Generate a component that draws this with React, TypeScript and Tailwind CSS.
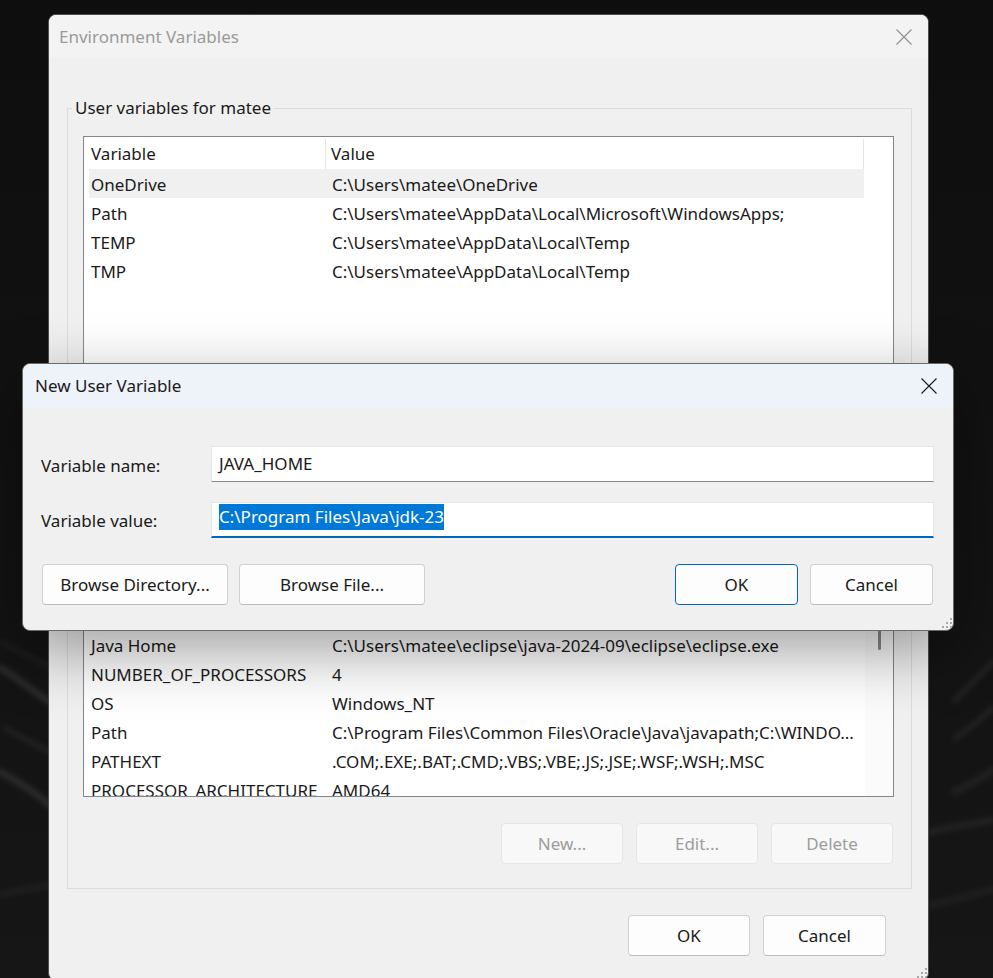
import clsx from "clsx";

type Row = [string, string];

const userRows: Row[] = [
    ["OneDrive", "C:\\Users\\matee\\OneDrive"],
    ["Path", "C:\\Users\\matee\\AppData\\Local\\Microsoft\\WindowsApps;"],
    ["TEMP", "C:\\Users\\matee\\AppData\\Local\\Temp"],
    ["TMP", "C:\\Users\\matee\\AppData\\Local\\Temp"],
];

const systemRows: Row[] = [
    ["ComSpec", "C:\\WINDOWS\\system32\\cmd.exe"],
    ["DriverData", "C:\\Windows\\System32\\Drivers\\DriverData"],
    ["Java Home", "C:\\Users\\matee\\eclipse\\java-2024-09\\eclipse\\eclipse.exe"],
    ["NUMBER_OF_PROCESSORS", "4"],
    ["OS", "Windows_NT"],
    ["Path", "C:\\Program Files\\Common Files\\Oracle\\Java\\javapath;C:\\WINDO..."],
    ["PATHEXT", ".COM;.EXE;.BAT;.CMD;.VBS;.VBE;.JS;.JSE;.WSF;.WSH;.MSC"],
    ["PROCESSOR_ARCHITECTURE", "AMD64"],
    ["PROCESSOR_IDENTIFIER", "Intel64 Family 6 Model 142 Stepping 10, GenuineIntel"],
];

function CloseIcon({ color }: { color: string }) {
    return (
        <svg width="16" height="16" viewBox="0 0 16 16">
            <path d="M0.5 0.5 L15.5 15.5 M15.5 0.5 L0.5 15.5" stroke={color} strokeWidth="1.1" fill="none" />
        </svg>
    );
}

function Gripper() {
    return (
        <svg width="12" height="12" viewBox="0 0 12 12">
            {[
                [9, 1],
                [5, 5],
                [9, 5],
                [1, 9],
                [5, 9],
                [9, 9],
            ].map(([x, y]) => (
                <rect key={`${x}-${y}`} x={x} y={y} width="2" height="2" fill="#a8a8a8" />
            ))}
        </svg>
    );
}

function Button({
    children,
    className,
    disabled,
    focused,
}: {
    children: React.ReactNode;
    className?: string;
    disabled?: boolean;
    focused?: boolean;
}) {
    return (
        <div
            className={clsx(
                "flex h-[41px] items-center justify-center whitespace-nowrap rounded-[4px] border",
                disabled
                    ? "border-[#e6e6e6] bg-[#f8f8f8] text-[#9d9d9d]"
                    : "bg-[#fdfdfd] text-[#1a1a1a]",
                !disabled && (focused ? "border-[#0067c0]" : "border-[#d0d0d0] border-b-[#bcbcbc]"),
                className
            )}
        >
            {children}
        </div>
    );
}

function ListView({
    rows,
    selected,
    scrollbar,
    className,
}: {
    rows: Row[];
    selected?: number;
    scrollbar?: boolean;
    className: string;
}) {
    return (
        <div className={clsx("flex overflow-hidden border border-[#82868d] bg-white", className)}>
            <div className="min-w-0 flex-1 pl-[5px]">
                <div className="flex h-[32px] w-[775px] items-center pt-[2px] text-[#1a1a1a]">
                    <div className="flex h-full w-[237px] items-center border-r border-[#e5e5e5] pl-[2px]">Variable</div>
                    <div className="flex h-full flex-1 items-center border-r border-[#e5e5e5] pl-[5px]">Value</div>
                </div>
                {rows.map(([name, value], i) => (
                    <div
                        key={name + i}
                        className={clsx(
                            "flex h-[29px] w-[775px] items-center whitespace-nowrap pt-[2px]",
                            i === selected && "bg-[#f0f0f0]"
                        )}
                    >
                        <div className="w-[237px] pl-[2px]">{name}</div>
                        <div className="flex-1 pl-[6px]">{value}</div>
                    </div>
                ))}
            </div>
            {scrollbar ? (
                <div className="flex w-[28px] justify-center bg-[#fbfbfb] pt-[20px]">
                    <div className="h-[90px] w-[3px] rounded-full bg-[#8a8a8a]" />
                </div>
            ) : (
                <div className="w-[28px]" />
            )}
        </div>
    );
}

function GroupBox({ label, children }: { label: string; children: React.ReactNode }) {
    return (
        <div className="relative ml-[18px] mr-[16px] border border-[#dcdcdc] pb-[24px] pl-[15px] pr-[17px] pt-[27px]">
            <div className="absolute -top-[12px] left-[4px] bg-[#f0f0f0] px-[3px] leading-[22px] text-[#1a1a1a]">
                {label}
            </div>
            {children}
        </div>
    );
}

function Wallpaper() {
    return (
        <svg className="absolute inset-0" width="993" height="978" viewBox="0 0 993 978">
            <defs>
                <filter id="soft" x="-20%" y="-20%" width="140%" height="140%">
                    <feGaussianBlur stdDeviation="2.5" />
                </filter>
                <linearGradient id="bg" x1="0" y1="0" x2="0" y2="1">
                    <stop offset="0" stopColor="#0e0e0e" />
                    <stop offset="1" stopColor="#161616" />
                </linearGradient>
            </defs>
            <rect width="993" height="978" fill="url(#bg)" />
            <g filter="url(#soft)" fill="none" stroke="#ffffff" strokeLinecap="round">
                <path d="M0 668 C15 675 30 690 50 702" strokeOpacity="0.09" strokeWidth="7" />
                <path d="M0 642 C20 650 35 660 50 668" strokeOpacity="0.05" strokeWidth="4" />
                <path d="M5 728 C20 736 35 745 50 752" strokeOpacity="0.07" strokeWidth="4" />
                <path d="M0 772 C15 780 35 792 50 805" strokeOpacity="0.09" strokeWidth="7" />
                <path d="M0 895 C20 890 35 888 50 885" strokeOpacity="0.04" strokeWidth="6" />
                <path d="M955 700 C965 690 980 675 993 662" strokeOpacity="0.06" strokeWidth="6" />
                <path d="M955 738 C970 728 982 718 993 708" strokeOpacity="0.08" strokeWidth="4" />
                <path d="M955 792 C970 784 982 778 993 770" strokeOpacity="0.05" strokeWidth="7" />
                <path d="M930 832 C950 827 975 823 993 820" strokeOpacity="0.06" strokeWidth="6" />
                <path d="M930 905 C955 900 975 894 993 889" strokeOpacity="0.04" strokeWidth="6" />
            </g>
        </svg>
    );
}

function EnvironmentWindow() {
    return (
        <div className="absolute left-[48px] top-[14px] flex h-[967px] w-[881px] flex-col overflow-hidden rounded-[8px] border border-[#4d4d4d] bg-[#f0f0f0]">
            <div className="flex h-[43px] shrink-0 items-center justify-between bg-[#f3f3f3] pl-[10px] pr-[16px]">
                <span className="text-[#9a9a9a]">Environment Variables</span>
                <CloseIcon color="#8f8f8f" />
            </div>

            <div className="mt-[50px]">
                <GroupBox label="User variables for matee">
                    <ListView rows={userRows} selected={0} className="h-[268px]" />
                    <div className="mt-[26px] flex justify-end gap-[13px] pr-[1px]">
                        <Button className="w-[122px]">New...</Button>
                        <Button className="w-[122px]">Edit...</Button>
                        <Button className="w-[122px]">Delete</Button>
                    </div>
                </GroupBox>
            </div>

            <div className="mt-[15px]">
                <GroupBox label="System variables">
                    <ListView rows={systemRows} scrollbar className="h-[258px]" />
                    <div className="mt-[26px] flex justify-end gap-[13px] pr-[1px]">
                        <Button disabled className="w-[122px]">New...</Button>
                        <Button disabled className="w-[122px]">Edit...</Button>
                        <Button disabled className="w-[122px]">Delete</Button>
                    </div>
                </GroupBox>
            </div>

            <div className="mt-[26px] flex justify-end gap-[13px] pr-[42px]">
                <Button className="w-[122px]">OK</Button>
                <Button className="w-[123px]">Cancel</Button>
            </div>

            <div className="absolute bottom-[1px] right-[0px]">
                <Gripper />
            </div>
        </div>
    );
}

function NewVariableDialog() {
    return (
        <div className="absolute left-[22px] top-[363px] flex h-[268px] w-[932px] flex-col rounded-[8px] border border-[#6a6a6a] bg-[#f0f0f0] shadow-[0_20px_64px_rgba(0,0,0,0.38)]">
            <div className="flex h-[44px] shrink-0 items-center justify-between rounded-t-[8px] bg-[#eef2f9] pl-[12px] pr-[16px]">
                <span className="text-[#1a1a1a]">New User Variable</span>
                <CloseIcon color="#1a1a1a" />
            </div>

            <div className="flex flex-col pl-[18px] pr-[19px] pt-[38px]">
                <div className="flex h-[36px] items-center">
                    <div className="w-[170px] pt-[3px]">Variable name:</div>
                    <div className="flex h-full flex-1 items-center border border-[#e6e6e6] border-b-[#8a8a8a] bg-white pl-[7px]">
                        JAVA_HOME
                    </div>
                </div>

                <div className="mt-[20px] flex h-[36px] items-center">
                    <div className="w-[170px] pt-[1px]">Variable value:</div>
                    <div className="flex h-full flex-1 items-start border border-b-2 border-[#e6e6e6] border-b-[#0067c0] bg-white pl-[7px] pt-[1px]">
                        <span className="bg-[#0078d7] leading-[26px] text-white">C:\Program Files\Java\jdk-23</span>
                    </div>
                </div>

                <div className="mt-[26px] flex items-center pl-[1px] pr-[1px]">
                    <Button className="w-[186px]">Browse Directory...</Button>
                    <Button className="ml-[11px] w-[186px]">Browse File...</Button>
                    <div className="flex-1" />
                    <Button focused className="w-[123px]">OK</Button>
                    <Button className="ml-[12px] w-[123px]">Cancel</Button>
                </div>
            </div>

            <div className="absolute bottom-[1px] right-[0px]">
                <Gripper />
            </div>
        </div>
    );
}

export default function App() {
    return (
        <div className="relative h-[978px] w-[993px] overflow-hidden bg-[#111111] font-['Noto_Sans','Open_Sans',sans-serif] text-[17px] text-[#1a1a1a]">
            <Wallpaper />
            <EnvironmentWindow />
            <NewVariableDialog />
        </div>
    );
}
